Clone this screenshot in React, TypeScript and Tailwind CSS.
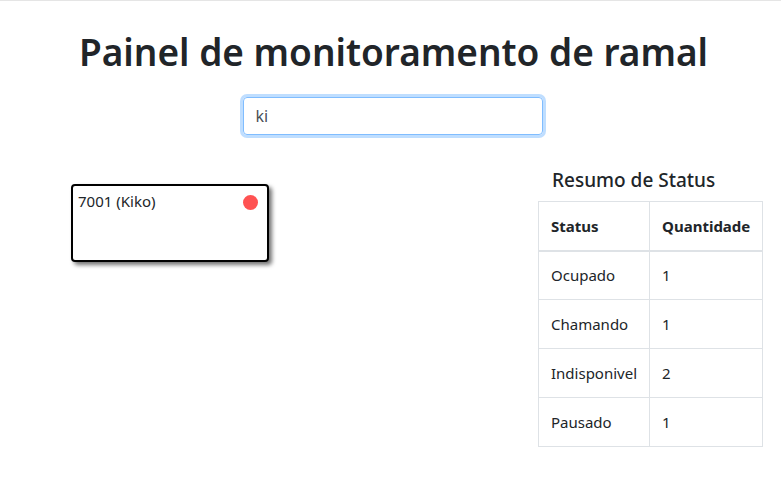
import { useState } from "react";

const summary = [
  { status: "Ocupado", qty: 1 },
  { status: "Chamando", qty: 1 },
  { status: "Indisponivel", qty: 2 },
  { status: "Pausado", qty: 1 },
];

export default function App() {
  const [query, setQuery] = useState("ki");

  return (
    <div className="min-h-[488px] w-[781px] bg-white border-t border-[#e5e5e5] text-[#212529] font-['Noto_Sans',sans-serif]">
      <h1 className="pl-[6px] pt-[27px] text-center text-[37px] font-semibold leading-[48px]">
        Painel de monitoramento de ramal
      </h1>

      <div className="mt-[21px] flex justify-center pl-[4px]">
        <input
          value={query}
          onChange={(e) => setQuery(e.target.value)}
          className="h-[38px] w-[300px] rounded-[4px] border border-[#80bdff] px-3 text-base text-[#495057] outline-none shadow-[0_0_0_3px_rgba(0,123,255,0.25)]"
        />
      </div>

      <div className="mt-[31px] flex">
        {/* cards */}
        <div className="ml-[71px] w-[198px] pt-[18px]">
          <div className="flex h-[78px] items-start justify-between rounded-[4px] border-2 border-black bg-white pl-[5px] pr-[9px] pt-[4px] shadow-[3px_3px_4px_rgba(0,0,0,0.55)]">
            <span className="text-[15px] leading-[22px]">7001 (Kiko)</span>
            <span className="mt-[5px] h-[15px] w-[15px] rounded-full bg-[#ff5252]" />
          </div>
        </div>

        {/* summary */}
        <div className="ml-[269px]">
          <h5 className="pl-[14px] text-[19px] font-medium leading-[28px]">Resumo de Status</h5>
          <table className="mt-[7px] w-[224px] border-collapse text-[15px]">
            <thead>
              <tr>
                <th className="h-[49px] w-[110px] border border-b-2 border-[#dee2e6] px-3 text-left font-bold">Status</th>
                <th className="h-[49px] border border-b-2 border-[#dee2e6] px-3 text-left font-bold">Quantidade</th>
              </tr>
            </thead>
            <tbody>
              {summary.map((row) => (
                <tr key={row.status}>
                  <td className="h-[49px] border border-[#dee2e6] px-3">{row.status}</td>
                  <td className="h-[49px] border border-[#dee2e6] px-3">{row.qty}</td>
                </tr>
              ))}
            </tbody>
          </table>
        </div>
      </div>
    </div>
  );
}
